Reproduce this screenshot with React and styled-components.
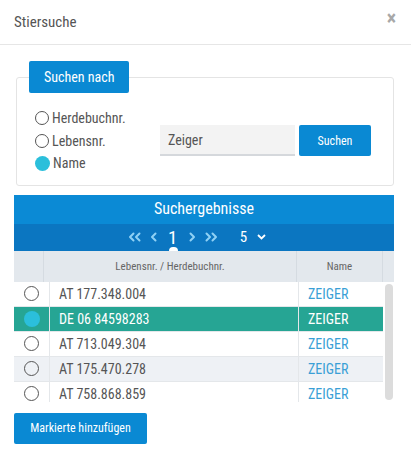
import React from "react";
import styled, { createGlobalStyle } from "styled-components";

const Global = createGlobalStyle`
  html, body { margin: 0; padding: 0; background: #fff; }
  body { font-family: "Roboto Condensed", "Liberation Sans Narrow", Roboto, "Liberation Sans", sans-serif; color: #555; }
  * { box-sizing: border-box; }
`;

const Modal = styled.div`
  width: 411px;
  height: 459px;
  display: flex;
  flex-direction: column;
`;

const Header = styled.div`
  height: 45px;
  display: flex;
  align-items: center;
  justify-content: space-between;
  padding: 0 15px 0 14px;
  border-bottom: 1px solid #e6e6e6;
`;

const Title = styled.div`
  font-size: 15px;
  color: #555;
  margin-top: -1px;
`;

const Close = styled.div`
  font-size: 20px;
  font-weight: bold;
  color: #a8a8a8;
  margin-top: -8px;
`;

const Body = styled.div`
  padding: 0 17px 0 14px;
  display: flex;
  flex-direction: column;
`;

const Fieldset = styled.fieldset`
  margin: 0 0 0 2px;
  margin-top: 16px;
  border: 1px solid #e4e4e4;
  border-radius: 3px;
  padding: 0 12px 10px;
  display: flex;
  align-items: center;
`;

const Legend = styled.legend`
  background: #0a89d3;
  color: #fff;
  font-size: 14px;
  height: 32px;
  line-height: 32px;
  padding: 0 14px 0 15px;
  border-radius: 2px;
`;

const RadioGroup = styled.div`
  margin: 14px 0 0 6px;
  display: flex;
  flex-direction: column;
  width: 125px;
`;

const RadioLine = styled.label`
  display: flex;
  align-items: center;
  height: 22.5px;
  font-size: 14px;
  color: #555;
  gap: 3px;
`;

const Circle = styled.span`
  width: ${p => p.$size || 14}px;
  height: ${p => p.$size || 14}px;
  border-radius: 50%;
  flex: none;
  border: ${p => (p.$on ? "none" : "1.7px solid #555")};
  background: ${p => (p.$on ? "#2bbfdb" : "transparent")};
`;

const SearchRow = styled.div`
  display: flex;
  gap: 4px;
  margin-top: 14px;
`;

const Input = styled.div`
  width: 135px;
  height: 31px;
  background: #f3f3f3;
  border-bottom: 2px solid #d5d8dc;
  font-size: 14px;
  color: #555;
  padding-left: 8px;
  display: flex;
  align-items: center;
`;

const Button = styled.button`
  height: 31px;
  width: ${p => p.$w}px;
  background: #0a89d3;
  color: #fff;
  border: none;
  border-radius: 2px;
  font-family: inherit;
  font-size: 12px;
  padding: 0;
`;

const Results = styled.div`
  margin-top: 9px;
  display: flex;
  flex-direction: column;
`;

const ResultsTitle = styled.div`
  height: 29px;
  background: #0b8ad5;
  color: #fff;
  font-size: 16px;
  display: flex;
  align-items: center;
  justify-content: center;
  padding-bottom: 1px;
`;

const Pager = styled.div`
  height: 27px;
  background: #0b76c1;
  display: flex;
  align-items: center;
  justify-content: center;
  padding-right: 14px;
  gap: 9px;
`;

const PageNum = styled.span`
  position: relative;
  color: #fff;
  font-size: 19px;
  width: 10px;
  text-align: center;
  line-height: 27px;
  margin: 0 2px;
  &::after {
    content: "";
    position: absolute;
    left: 1px;
    bottom: 0;
    width: 9px;
    height: 4px;
    border-radius: 5px 5px 0 0;
    background: #fff;
  }
`;

const PerPage = styled.span`
  color: #fff;
  font-size: 15px;
  margin-left: 13px;
  display: flex;
  align-items: center;
  gap: 10px;
`;

const HeadRow = styled.div`
  display: grid;
  grid-template-columns: 30px 253px 86px 1fr;
  height: 31px;
  background: #e3e8ed;
`;

const HeadCell = styled.div`
  display: flex;
  align-items: center;
  justify-content: center;
  font-size: 11px;
  color: #666;
  border-right: 1px solid #d5dbe1;
  &:last-child { border-right: none; }
`;

const TableBody = styled.div`
  height: 120px;
  overflow: hidden;
  display: flex;
`;

const RowList = styled.div`
  flex: 1;
  display: flex;
  flex-direction: column;
`;

const ScrollTrack = styled.div`
  width: 11px;
  padding: 2px 1px 2px 2px;
  background: #fff;
`;

const ScrollThumb = styled.div`
  height: 100%;
  border-radius: 5px;
  background: #dcdcdc;
`;

const Row = styled.div`
  display: grid;
  grid-template-columns: 36px 249px 1fr;
  height: 25px;
  flex: none;
  background: ${p => (p.$sel ? "#26a594" : p.$hover ? "#eef1f5" : "#fff")};
  border-bottom: 1px solid #e4e7ea;
`;

const Cell = styled.div`
  display: flex;
  align-items: center;
  justify-content: ${p => (p.$center ? "center" : "flex-start")};
  padding-left: ${p => (p.$center ? 0 : 9)}px;
  font-size: 14px;
  color: ${p => (p.$sel ? "#fff" : p.$link ? "#3a9fd6" : "#555")};
  border-right: ${p => (p.$last ? "none" : "1px solid #e4e7ea")};
`;

const Footer = styled.div`
  margin-top: 11px;
`;

const Chevrons = ({ double, dir }) => {
  const flip = dir === "right" ? "scale(-1,1) translate(-13,0)" : undefined;
  return (
    <svg width={double ? 13 : 7} height="10" viewBox={double ? "0 0 13 10" : "0 0 7 10"}>
      <g transform={double ? flip : dir === "right" ? "scale(-1,1) translate(-7,0)" : undefined}
         stroke="#8fd1f5" strokeWidth="2" fill="none" strokeLinecap="round" strokeLinejoin="round">
        <path d="M5.5 1.5L2 5l3.5 3.5" />
        {double && <path d="M11.5 1.5L8 5l3.5 3.5" />}
      </g>
    </svg>
  );
};

const rows = [
  { id: "AT 177.348.004" },
  { id: "DE 06 84598283", sel: true },
  { id: "AT 713.049.304" },
  { id: "AT 175.470.278", hover: true },
  { id: "AT 758.868.859" },
];

export default function App() {
  return (
    <Modal>
      <Global />
      <Header>
        <Title>Stiersuche</Title>
        <Close>×</Close>
      </Header>
      <Body>
        <Fieldset>
          <Legend>Suchen nach</Legend>
          <RadioGroup>
            <RadioLine><Circle />Herdebuchnr.</RadioLine>
            <RadioLine><Circle />Lebensnr.</RadioLine>
            <RadioLine><Circle $on $size={15} />Name</RadioLine>
          </RadioGroup>
          <SearchRow>
            <Input>Zeiger</Input>
            <Button $w={72}>Suchen</Button>
          </SearchRow>
        </Fieldset>
        <Results>
          <ResultsTitle>Suchergebnisse</ResultsTitle>
          <Pager>
            <Chevrons double />
            <Chevrons />
            <PageNum>1</PageNum>
            <Chevrons dir="right" />
            <Chevrons double dir="right" />
            <PerPage>
              5
              <svg width="9" height="6" viewBox="0 0 9 6">
                <path d="M1 1l3.5 3.5L8 1" stroke="#fff" strokeWidth="1.8" fill="none" />
              </svg>
            </PerPage>
          </Pager>
          <HeadRow>
            <HeadCell />
            <HeadCell>Lebensnr. / Herdebuchnr.</HeadCell>
            <HeadCell>Name</HeadCell>
            <HeadCell />
          </HeadRow>
          <TableBody>
            <RowList>
              {rows.map(r => (
                <Row key={r.id} $sel={r.sel} $hover={r.hover}>
                  <Cell $center>
                    <Circle $on={r.sel} $size={r.sel ? 16 : 15} />
                  </Cell>
                  <Cell $sel={r.sel}>{r.id}</Cell>
                  <Cell $sel={r.sel} $link $last>ZEIGER</Cell>
                </Row>
              ))}
            </RowList>
            <ScrollTrack>
              <ScrollThumb />
            </ScrollTrack>
          </TableBody>
        </Results>
        <Footer>
          <Button $w={133}>Markierte hinzufügen</Button>
        </Footer>
      </Body>
    </Modal>
  );
}
